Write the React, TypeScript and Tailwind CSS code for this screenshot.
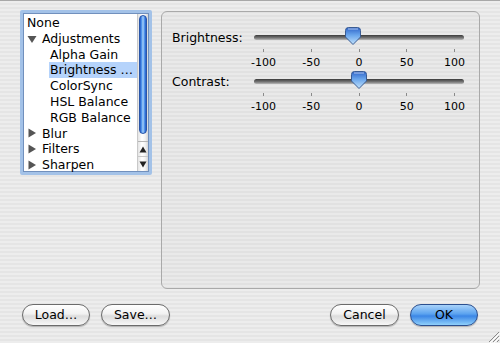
import { ReactNode } from "react";

const font = { fontFamily: '"DejaVu Sans", "Liberation Sans", sans-serif' };

interface IRow {
  label: string;
  level: number;
  arrow?: "open" | "closed";
  selected?: boolean;
}

const rows: IRow[] = [
  { label: "None", level: 0 },
  { label: "Adjustments", level: 0, arrow: "open" },
  { label: "Alpha Gain", level: 1 },
  { label: "Brightness …", level: 1, selected: true },
  { label: "ColorSync", level: 1 },
  { label: "HSL Balance", level: 1 },
  { label: "RGB Balance", level: 1 },
  { label: "Blur", level: 0, arrow: "closed" },
  { label: "Filters", level: 0, arrow: "closed" },
  { label: "Sharpen", level: 0, arrow: "closed" },
];

const Triangle = ({ open }: { open: boolean }) => (
  <svg width="10" height="10" viewBox="0 0 10 10" className="mr-[5px] shrink-0">
    {open ? (
      <path d="M0.5 2 H9.5 L5 9 Z" fill="#555" />
    ) : (
      <path d="M1.5 0.5 V9.5 L9 5 Z" fill="#555" />
    )}
  </svg>
);

const ListBox = () => (
  <div className="w-[132px] h-[165px] border-[3px] border-[#a3c2e8] rounded-[2px]">
    <div className="h-full border border-[#7190bd] bg-white flex">
      <div className="flex-1 pt-[1px]">
        {rows.map((r) => (
          <div
            key={r.label}
            className={`h-[15.8px] leading-[15.8px] text-[12.5px] text-black flex items-center whitespace-nowrap ${
              r.level === 0 ? "pl-[3px]" : "pl-[26px]"
            }`}
          >
            {r.arrow && <Triangle open={r.arrow === "open"} />}
            <span className={r.selected ? "bg-[#b5d3fb] pl-[1px] pr-[4px] -ml-[1px] flex-1" : ""}>
              {r.label}
            </span>
          </div>
        ))}
      </div>
      <ScrollBar />
    </div>
  </div>
);

const ScrollBar = () => (
  <div className="w-[15px] h-full border-l border-[#c9c9c9] bg-[linear-gradient(to_right,#e4e4e4,#ffffff_40%,#f4f4f4_70%,#d6d6d6)] flex flex-col">
    <div className="flex-1 px-[1px] pt-[1px] pb-[5px]">
      <div className="h-[119px] rounded-full border border-[#2a55a8] bg-[linear-gradient(to_right,#2457c4,#4f92ea_25%,#a6d0fa_50%,#4f92ea_75%,#2457c4)]" />
    </div>
    <div className="h-[15px] border-t border-[#b5b5b5] flex items-center justify-center">
      <svg width="8" height="7" viewBox="0 0 8 7">
        <path d="M4 0.5 L7.5 6.5 H0.5 Z" fill="#222" />
      </svg>
    </div>
    <div className="h-[15px] border-t border-[#c8c8c8] flex items-center justify-center">
      <svg width="8" height="7" viewBox="0 0 8 7">
        <path d="M0.5 0.5 H7.5 L4 6.5 Z" fill="#222" />
      </svg>
    </div>
  </div>
);

const Thumb = () => (
  <svg width="18" height="20" viewBox="0 0 18 20">
    <defs>
      <linearGradient id="tg" x1="0" y1="0" x2="0" y2="1">
        <stop offset="0" stopColor="#2e63c8" />
        <stop offset="0.45" stopColor="#6aa6ec" />
        <stop offset="1" stopColor="#c3e2fb" />
      </linearGradient>
    </defs>
    <path
      d="M1.5 4.5 Q1.5 1.5 4.5 1.5 H13.5 Q16.5 1.5 16.5 4.5 V11 L9 18.5 L1.5 11 Z"
      fill="url(#tg)"
      stroke="#3a5c93"
      strokeWidth="1"
    />
    <path d="M4 3 H14" stroke="#ffffff" strokeOpacity="0.6" strokeWidth="1" />
  </svg>
);

const ticks = ["-100", "-50", "0", "50", "100"];

const Slider = ({ label, thumbAt }: { label: string; thumbAt: number }) => (
  <div className="flex">
    <div className="w-[82px] text-[12.5px] text-black leading-[15px] -mt-[1px]">{label}</div>
    <div className="w-[210px] flex flex-col">
      <div className="relative h-[12px] flex items-center">
        <div className="w-full h-[5px] rounded-full bg-[linear-gradient(to_bottom,#3a3a3a,#7a7a7a_60%,#b8b8b8)]" />
        <div className="absolute top-[-5px]" style={{ left: thumbAt - 9 }}>
          <Thumb />
        </div>
      </div>
      <div className="flex justify-between px-[9px] h-[9px] items-end">
        {ticks.map((t) => (
          <div key={t} className="w-[1px] h-[3px] bg-[#8a8a8a]" />
        ))}
      </div>
      <div className="flex justify-between px-[9px] h-[23px] items-start pt-[4px]">
        {ticks.map((t) => (
          <div key={t} className="w-[1px] flex justify-center">
            <span className="text-[11px] leading-[13px] text-black whitespace-nowrap">{t}</span>
          </div>
        ))}
      </div>
    </div>
  </div>
);

const AquaButton = ({
  children,
  width,
  primary,
}: {
  children: ReactNode;
  width: string;
  primary?: boolean;
}) => (
  <button
    type="button"
    className={`${width} h-[22px] rounded-full text-[12.5px] text-black flex items-center justify-center border ${
      primary
        ? "border-[#2b4f8f] bg-[linear-gradient(to_bottom,#a9d3fa,#5aa2ef_45%,#3b86e6_55%,#8fd0fb)]"
        : "border-[#6b6b6b] bg-[linear-gradient(to_bottom,#ffffff,#f1f1f1_45%,#dcdcdc_55%,#f7f7f7)]"
    } shadow-[0_1px_1px_rgba(0,0,0,0.25)]`}
  >
    {children}
  </button>
);

export default function App() {
  return (
    <div
      style={font}
      className="relative w-[500px] h-[343px] overflow-hidden border-t border-[#a8a8a8] bg-[repeating-linear-gradient(to_bottom,#ededed_0px,#ededed_2px,#e5e5e5_2px,#e5e5e5_4px)]"
    >
      <div className="flex items-start pt-[9px] pl-[20px]">
        <ListBox />
        <div className="ml-[9px] mt-[1px] w-[319px] h-[278px] rounded-[6px] border border-[#a9a9a9] bg-[rgba(0,0,0,0.015)] pl-[10px] pt-[19px] flex flex-col">
          <Slider label="Brightness:" thumbAt={99} />
          <Slider label="Contrast:" thumbAt={105} />
        </div>
      </div>
      <div className="flex items-center mt-[15px] pl-[22px] pr-[22px]">
        <AquaButton width="w-[68px]">Load…</AquaButton>
        <div className="ml-[11px]">
          <AquaButton width="w-[69px]">Save…</AquaButton>
        </div>
        <div className="flex-1" />
        <AquaButton width="w-[69px]">Cancel</AquaButton>
        <div className="ml-[11px]">
          <AquaButton width="w-[68px]" primary>
            OK
          </AquaButton>
        </div>
      </div>
      <svg width="12" height="12" viewBox="0 0 12 12" className="absolute right-0 bottom-0">
        <path d="M11 1 L1 11 M11 5 L5 11 M11 9 L9 11" stroke="#8a8a8a" strokeWidth="1" />
        <path d="M12 2 L2 12 M12 6 L6 12" stroke="#ffffff" strokeWidth="1" />
      </svg>
    </div>
  );
}
